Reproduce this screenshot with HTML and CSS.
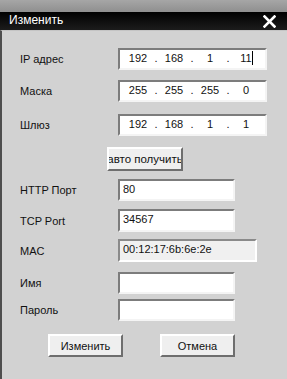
FILE: index.html
```html
<!DOCTYPE html>
<html>
<head>
    <meta charset="utf-8">
    <title>Изменить</title>
    <link rel="stylesheet" href="styles.css">
</head>
<body>

<div class="dialog">
  <div class="titlebar">
    <div class="caption">
      <span class="caption-text">Изменить</span>
      <svg class="close" width="13" height="13" viewBox="0 0 13 13">
        <path d="M1.5 1.5 L11.5 11.5 M11.5 1.5 L1.5 11.5" stroke="#ffffff" stroke-width="2.6" stroke-linecap="square"/>
      </svg>
    </div>
  </div>

  <div class="content">
    <div class="row row-ip">
      <span class="label">IP адрес</span>
      <div class="field ip">
        <span class="octet">192</span><span class="dot">.</span>
        <span class="octet">168</span><span class="dot">.</span>
        <span class="octet">1</span><span class="dot">.</span>
        <span class="octet">11<span class="caret"></span></span>
      </div>
    </div>

    <div class="row row-mask">
      <span class="label">Маска</span>
      <div class="field ip">
        <span class="octet">255</span><span class="dot">.</span>
        <span class="octet">255</span><span class="dot">.</span>
        <span class="octet">255</span><span class="dot">.</span>
        <span class="octet">0</span>
      </div>
    </div>

    <div class="row row-gw">
      <span class="label">Шлюз</span>
      <div class="field ip">
        <span class="octet">192</span><span class="dot">.</span>
        <span class="octet">168</span><span class="dot">.</span>
        <span class="octet">1</span><span class="dot">.</span>
        <span class="octet">1</span>
      </div>
    </div>

    <div class="row row-auto">
      <div class="btn btn-auto">авто получить</div>
    </div>

    <div class="row row-http">
      <span class="label">HTTP Порт</span>
      <div class="field text">80</div>
    </div>

    <div class="row row-tcp">
      <span class="label">TCP Port</span>
      <div class="field text">34567</div>
    </div>

    <div class="row row-mac">
      <span class="label">MAC</span>
      <div class="field text readonly">00:12:17:6b:6e:2e</div>
    </div>

    <div class="row row-name">
      <span class="label">Имя</span>
      <div class="field text"></div>
    </div>

    <div class="row row-pass">
      <span class="label">Пароль</span>
      <div class="field text"></div>
    </div>

    <div class="buttons">
      <div class="btn">Изменить</div>
      <div class="btn">Отмена</div>
    </div>
  </div>
</div>

</body>
</html>
```

FILE: styles.css
```css
body {
  margin: 0;
  background-color: #d2d2d2;
  font-family: "Liberation Sans", Arial, sans-serif;
  font-size: 11px;
  color: #111111;
}

.dialog {
  width: 287px;
  height: 379px;
  display: flex;
  flex-direction: column;
}

.titlebar {
  height: 30px;
  padding-top: 12px;
  box-sizing: border-box;
  background: linear-gradient(#a6a6a6, #6c6c6c);
}

.caption {
  height: 18px;
  background: linear-gradient(#000000, #1c1c1c);
  display: flex;
  align-items: center;
  justify-content: space-between;
  padding: 0 11px 0 9px;
  color: #ffffff;
  font-size: 12px;
}

.caption-text {
  margin-top: -3px;
}

.close {
  display: block;
  margin-top: 1px;
}

.content {
  flex: 1;
  border-left: 2px solid #4e4e4e;
  border-top: 1px solid #c4c4c4;
  padding: 17px 0 0 18px;
}

.row {
  display: flex;
  align-items: center;
}

.label {
  width: 98px;
}

.field {
  box-sizing: border-box;
  height: 22px;
  background: #ffffff;
  border: 2px solid;
  border-color: #7c7c7c #f4f4f4 #f4f4f4 #7c7c7c;
}

.ip {
  width: 149px;
  display: flex;
  align-items: center;
  padding-left: 4px;
  padding-bottom: 2px;
}

.octet {
  width: 28px;
  text-align: center;
  position: relative;
}

.dot {
  width: 8px;
  text-align: center;
}

.caret {
  position: absolute;
  top: -1px;
  right: 7px;
  width: 1px;
  height: 14px;
  background: #000000;
}

.text {
  width: 117px;
  padding: 1px 0 0 3px;
  line-height: 14px;
}

.readonly {
  width: 139px;
  height: 23px;
  background: #f0f0f0;
  border-color: #8a8a8a #ffffff #ffffff #8a8a8a;
}

.row-mask { margin-top: 10px; }
.row-gw { margin-top: 12px; }
.row-auto { margin-top: 11px; padding-left: 87px; }
.row-http { margin-top: 8px; }
.row-tcp { margin-top: 8px; }
.row-tcp .field { height: 23px; }
.row-mac { margin-top: 7px; }
.row-name { margin-top: 10px; }
.row-pass { margin-top: 5px; }

.btn {
  box-sizing: border-box;
  width: 75px;
  height: 23px;
  background: #efefef;
  border: 2px solid;
  border-color: #ffffff #6e6e6e #6e6e6e #ffffff;
  display: flex;
  align-items: center;
  justify-content: center;
  white-space: nowrap;
  overflow: hidden;
  color: #111111;
}

.btn-auto {
  width: 76px;
  height: 24px;
  font-size: 11.5px;
}

.buttons {
  display: flex;
  gap: 37px;
  margin-top: 13px;
  padding-left: 28px;
}
```
